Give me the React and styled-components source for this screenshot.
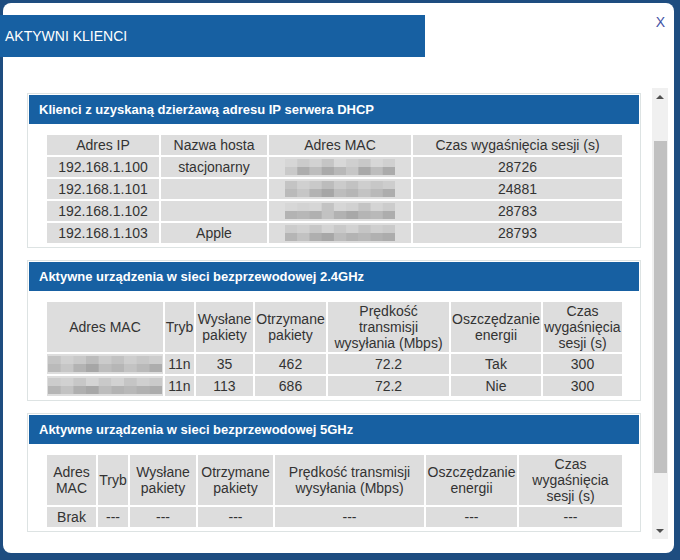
import React from "react";
import styled, { createGlobalStyle } from "styled-components";

const GlobalStyle = createGlobalStyle`
  html, body {
    margin: 0;
    padding: 0;
    background: #1e4d80;
  }
  body {
    font-family: "Liberation Sans", Arial, sans-serif;
  }
`;

const color = {
  frame: "#1e4d80",
  blue: "#1760a2",
  cell: "#dddddd",
  text: "#333333",
  border: "#dde3e3",
  close: "#4353a6",
  track: "#f0f0f0",
  thumb: "#c1c1c1",
  arrow: "#505050",
};

// pixelated (blurred) MAC addresses
const macRows = [
  [
    ["#d6d6d6", "#cbcbcb", "#d2d2d2", "#c5c5c5", "#d8d8d8", "#cfcfcf", "#c8c8c8", "#d7d7d7", "#d0d0d0"],
    ["#c9c9c9", "#adadad", "#bdbdbd", "#aaaaaa", "#b8b8b8", "#c6c6c6", "#a9a9a9", "#bdbdbd", "#ababab"],
  ],
  [
    ["#c4c4c4", "#d0d0d0", "#c9c9c9", "#bcbcbc", "#cbcbcb", "#c2c2c2", "#cecece", "#c7c7c7", "#cdcdcd"],
    ["#bababa", "#c6c6c6", "#b3b3b3", "#a6a6a6", "#bdbdbd", "#b6b6b6", "#c3c3c3", "#b9b9b9", "#adadad"],
  ],
  [
    ["#d7d7d7", "#d3d3d3", "#d6d6d6", "#c3c3c3", "#d6d6d6", "#d1d1d1", "#c4c4c4", "#d4d4d4", "#cccccc"],
    ["#b3b3b3", "#b7b7b7", "#b0b0b0", "#c2c2c2", "#b2b2b2", "#a8a8a8", "#b5b5b5", "#b9b9b9", "#adadad"],
  ],
  [
    ["#cccccc", "#d1d1d1", "#c7c7c7", "#d4d4d4", "#c9c9c9", "#d2d2d2", "#c5c5c5", "#cfcfcf", "#cacaca"],
    ["#b5b5b5", "#c2c2c2", "#afafaf", "#a7a7a7", "#bcbcbc", "#b3b3b3", "#b8b8b8", "#b1b1b1", "#acacac"],
  ],
];

const Mosaic = ({ rows, width }) => {
  const cols = rows[0].length;
  const w = width / cols;
  return (
    <MosaicSvg width={width} height="16" viewBox={`0 0 ${width} 16`}>
      {rows.map((row, r) =>
        row.map((c, i) => (
          <rect key={`${r}-${i}`} x={i * w} y={r * 8} width={w + 0.5} height="8" fill={c} />
        ))
      )}
    </MosaicSvg>
  );
};

const dhcp = [
  ["192.168.1.100", "stacjonarny", 0, "28726"],
  ["192.168.1.101", "", 1, "24881"],
  ["192.168.1.102", "", 2, "28783"],
  ["192.168.1.103", "Apple", 3, "28793"],
];

const wifi24 = [
  [1, "11n", "35", "462", "72.2", "Tak", "300"],
  [3, "11n", "113", "686", "72.2", "Nie", "300"],
];

const Panel = ({ title, cols, children }) => (
  <PanelBox>
    <PanelHeader>{title}</PanelHeader>
    <Table>
      <colgroup>
        {cols.map((w, i) => (
          <col key={i} style={{ width: w }} />
        ))}
      </colgroup>
      <tbody>{children}</tbody>
    </Table>
  </PanelBox>
);

const App = () => {
  return (
    <>
      <GlobalStyle />
      <Modal>
        <TitleBar>AKTYWNI KLIENCI</TitleBar>
        <Close>X</Close>
        <ScrollArea>
          <Viewport>
            <Panel
              title="Klienci z uzyskaną dzierżawą adresu IP serwera DHCP"
              cols={[112, 106, 142, 209]}
            >
              <tr>
                <Cell>Adres IP</Cell>
                <Cell>Nazwa hosta</Cell>
                <Cell>Adres MAC</Cell>
                <Cell>Czas wygaśnięcia sesji (s)</Cell>
              </tr>
              {dhcp.map(([ip, host, mac, time]) => (
                <tr key={ip}>
                  <Cell>{ip}</Cell>
                  <Cell>{host}</Cell>
                  <Cell>
                    <Mosaic rows={macRows[mac]} width={110} />
                  </Cell>
                  <Cell>{time}</Cell>
                </tr>
              ))}
            </Panel>

            <Panel
              title="Aktywne urządzenia w sieci bezprzewodowej 2.4GHz"
              cols={[116, 29, 57, 71, 121, 90, 79]}
            >
              <tr>
                <Cell>Adres MAC</Cell>
                <Cell>Tryb</Cell>
                <Cell>Wysłane pakiety</Cell>
                <Cell>Otrzymane pakiety</Cell>
                <Cell>Prędkość transmisji wysyłania (Mbps)</Cell>
                <Cell>Oszczędzanie energii</Cell>
                <Cell>Czas wygaśnięcia sesji (s)</Cell>
              </tr>
              {wifi24.map(([mac, ...rest], i) => (
                <tr key={i}>
                  <Cell>
                    <Mosaic rows={macRows[mac]} width={114} />
                  </Cell>
                  {rest.map((v, j) => (
                    <Cell key={j}>{v}</Cell>
                  ))}
                </tr>
              ))}
            </Panel>

            <Panel
              title="Aktywne urządzenia w sieci bezprzewodowej 5GHz"
              cols={[49, 30, 66, 75, 149, 91, 103]}
            >
              <tr>
                <Cell>Adres MAC</Cell>
                <Cell>Tryb</Cell>
                <Cell>Wysłane pakiety</Cell>
                <Cell>Otrzymane pakiety</Cell>
                <Cell>Prędkość transmisji wysyłania (Mbps)</Cell>
                <Cell>Oszczędzanie energii</Cell>
                <Cell>Czas wygaśnięcia sesji (s)</Cell>
              </tr>
              <tr>
                <Cell>Brak</Cell>
                {Array.from({ length: 6 }).map((_, j) => (
                  <Cell key={j}>---</Cell>
                ))}
              </tr>
            </Panel>
          </Viewport>
          <ScrollBar>
            <ArrowButton>
              <Arrow up />
            </ArrowButton>
            <Thumb />
            <ArrowButton>
              <Arrow />
            </ArrowButton>
          </ScrollBar>
        </ScrollArea>
      </Modal>
    </>
  );
};

export default App;

const Modal = styled.div`
  position: relative;
  margin: 3px;
  width: 671px;
  height: 550px;
  box-sizing: border-box;
  background: #ffffff;
  border-radius: 8px;
  padding-top: 12px;
  display: flex;
  flex-direction: column;
`;

const TitleBar = styled.div`
  margin-left: -3px;
  width: 425px;
  height: 42px;
  background: ${color.blue};
  color: #ffffff;
  font-size: 14px;
  line-height: 42px;
  padding-left: 5px;
  box-sizing: border-box;
`;

const Close = styled.div`
  position: absolute;
  top: 11px;
  right: 9px;
  font-size: 14px;
  color: ${color.close};
  cursor: pointer;
`;

const ScrollArea = styled.div`
  margin: 31px 0 0 24px;
  width: 641px;
  height: 451px;
  display: flex;
`;

const Viewport = styled.div`
  flex: 1;
  overflow: hidden;
  padding: 5px 11px 0 0;
  display: flex;
  flex-direction: column;
  gap: 12px;
`;

const ScrollBar = styled.div`
  width: 16px;
  flex-shrink: 0;
  background: ${color.track};
  display: flex;
  flex-direction: column;
  align-items: center;
`;

const ArrowButton = styled.div`
  width: 16px;
  height: 17px;
  display: flex;
  align-items: center;
  justify-content: center;
  &:last-child {
    margin-top: auto;
  }
`;

const Arrow = styled.span`
  width: 0;
  height: 0;
  border-left: 4px solid transparent;
  border-right: 4px solid transparent;
  ${({ up }) =>
    up
      ? `border-bottom: 4px solid ${color.arrow};`
      : `border-top: 4px solid ${color.arrow};`}
`;

const Thumb = styled.div`
  width: 13px;
  height: 332px;
  margin-top: 36px;
  background: ${color.thumb};
`;

const PanelBox = styled.div`
  flex-shrink: 0;
  border: 1px solid ${color.border};
  padding: 1px;
`;

const PanelHeader = styled.div`
  height: 29px;
  line-height: 29px;
  background: ${color.blue};
  color: #ffffff;
  font-size: 13px;
  font-weight: bold;
  padding-left: 10px;
`;

const Table = styled.table`
  table-layout: fixed;
  width: 579px;
  margin: 9px 16px 1px;
  border-collapse: separate;
  border-spacing: 2px;
  tr {
    height: 20px;
  }
`;

const Cell = styled.td`
  background: ${color.cell};
  color: ${color.text};
  font-size: 14px;
  line-height: 16px;
  padding: 1px 0;
  text-align: center;
  vertical-align: middle;
  overflow: hidden;
`;

const MosaicSvg = styled.svg`
  display: block;
  margin: 0 auto;
`;
